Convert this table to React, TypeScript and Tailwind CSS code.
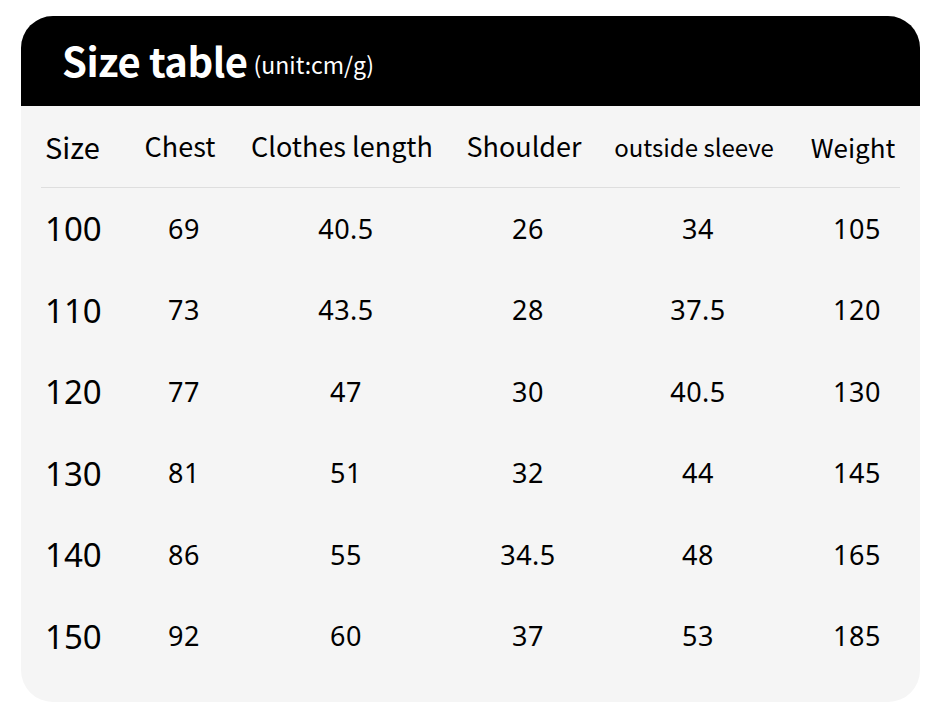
import React from 'react';

/** 列定义：宽度与对齐 */
const columns = [
  { key: 'size', label: 'Size', width: 'w-[64px]', align: 'justify-start pl-1', head: 'text-[29px]' },
  { key: 'chest', label: 'Chest', width: 'w-[150px]', align: 'justify-center', head: 'text-[27px]' },
  { key: 'length', label: 'Clothes length', width: 'w-[174px]', align: 'justify-center', head: 'text-[27px]' },
  { key: 'shoulder', label: 'Shoulder', width: 'w-[190px]', align: 'justify-center', head: 'text-[27px]' },
  { key: 'sleeve', label: 'outside sleeve', width: 'w-[150px]', align: 'justify-center', head: 'text-[24px]' },
  { key: 'weight', label: 'Weight', width: 'w-[131px]', align: 'justify-center pl-[37px]', head: 'text-[26px]' },
];

const rows = [
  ['100', '69', '40.5', '26', '34', '105'],
  ['110', '73', '43.5', '28', '37.5', '120'],
  ['120', '77', '47', '30', '40.5', '130'],
  ['130', '81', '51', '32', '44', '145'],
  ['140', '86', '55', '34.5', '48', '165'],
  ['150', '92', '60', '37', '53', '185'],
];

export default function App() {
  return (
    <div className="w-[940px] h-[716px] bg-white pt-4 px-[20px] font-['Noto_Sans_CJK_SC',sans-serif] text-black">
      <div className="w-[899px] ml-[1px] h-[686px] rounded-[32px] overflow-hidden bg-[#f5f5f5] flex flex-col">
        {/* 标题栏 */}
        <div className="h-[90px] bg-black flex items-center pl-[41px] pb-[2px] text-white leading-none">
          <span className="text-[40px] font-bold tracking-[-0.5px]">Size table</span>
          <span className="text-[23px] ml-[6px] mt-[8px]">(unit:cm/g)</span>
        </div>

        <div className="px-5 flex flex-col">
          {/* 表头 */}
          <div className="h-[82px] flex items-center border-b border-[#dedede]">
            {columns.map((c) => (
              <div key={c.key} className={`${c.width} ${c.align} ${c.head} flex shrink-0 whitespace-nowrap`}>
                {c.label}
              </div>
            ))}
          </div>

          {/* 数据行 */}
          {rows.map((r) => (
            <div key={r[0]} className="h-[81.5px] flex items-center font-['Noto_Sans',sans-serif]">
              {r.map((v, i) => (
                <div
                  key={i}
                  className={`${columns[i].width} ${columns[i].align} flex shrink-0 whitespace-nowrap ${
                    i === 0 ? 'text-[33px]' : 'text-[27px] tracking-[0.5px] translate-x-[4px]'
                  }`}
                >
                  {v}
                </div>
              ))}
            </div>
          ))}
        </div>
      </div>
    </div>
  );
}
